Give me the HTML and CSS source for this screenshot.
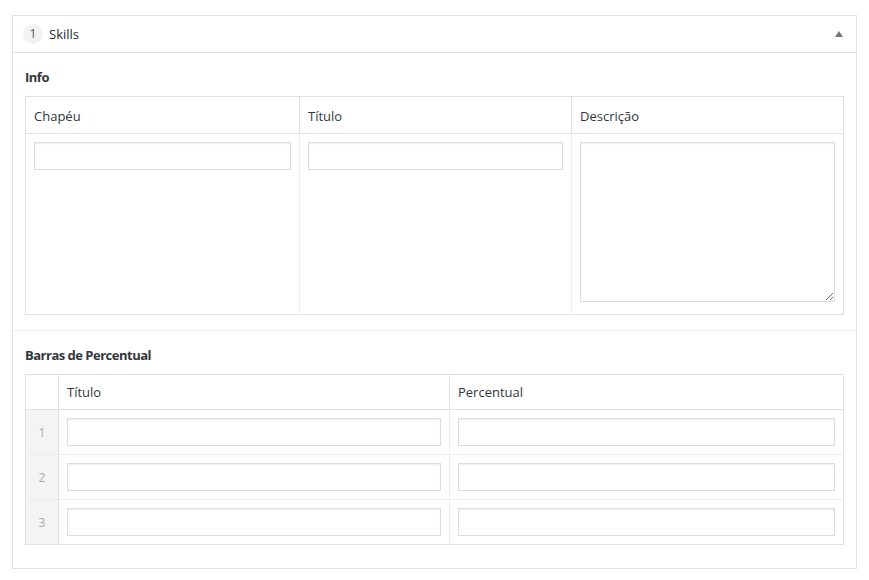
FILE: index.html
```html
<!DOCTYPE html>
<html>
<head>
    <meta charset="utf-8">
    <title>Skills</title>
    <link rel="stylesheet" href="styles.css">
</head>
<body>
    <div class="layout">
        <div class="layout-handle">
            <span class="layout-order">1</span>
            <span class="layout-title">Skills</span>
            <span class="layout-toggle"></span>
        </div>

        <!-- Info group -->
        <div class="field">
            <div class="field-label">Info</div>
            <table class="field-table info-table">
                <thead>
                    <tr>
                        <th class="col-first">Chapéu</th>
                        <th class="col-second">Título</th>
                        <th>Descrição</th>
                    </tr>
                </thead>
                <tbody>
                    <tr>
                        <td><input type="text" class="text-input"></td>
                        <td><input type="text" class="text-input"></td>
                        <td><textarea class="text-area"></textarea></td>
                    </tr>
                </tbody>
            </table>
        </div>

        <!-- Repeater -->
        <div class="field field-last">
            <div class="field-label">Barras de Percentual</div>
            <table class="field-table repeater-table">
                <thead>
                    <tr>
                        <th class="row-handle"></th>
                        <th class="col-title">Título</th>
                        <th>Percentual</th>
                    </tr>
                </thead>
                <tbody>
                    <tr>
                        <td class="row-handle">1</td>
                        <td><input type="text" class="text-input"></td>
                        <td><input type="text" class="text-input"></td>
                    </tr>
                    <tr>
                        <td class="row-handle">2</td>
                        <td><input type="text" class="text-input"></td>
                        <td><input type="text" class="text-input"></td>
                    </tr>
                    <tr>
                        <td class="row-handle">3</td>
                        <td><input type="text" class="text-input"></td>
                        <td><input type="text" class="text-input"></td>
                    </tr>
                </tbody>
            </table>
        </div>
    </div>
</body>
</html>
```

FILE: styles.css
```css
body {
    margin: 15px 12px 0 12px;
    font-family: "Open Sans", "Noto Sans", sans-serif;
    font-size: 13px;
    color: #32373c;
    background: #fff;
}

.layout {
    border: 1px solid #e1e1e1;
    background: #fff;
}

.layout-handle {
    display: flex;
    align-items: center;
    height: 36px;
    padding: 0 12px 0 10px;
    border-bottom: 1px solid #e1e1e1;
}

.layout-order {
    width: 20px;
    height: 20px;
    line-height: 20px;
    border-radius: 50%;
    background: #f2f2f2;
    color: #555;
    font-size: 12px;
    text-align: center;
    margin-right: 6px;
}

.layout-title {
    flex: 1;
    font-size: 13px;
    color: #23282d;
}

.layout-toggle {
    width: 0;
    height: 0;
    border-left: 4px solid transparent;
    border-right: 4px solid transparent;
    border-bottom: 6px solid #72777c;
    margin-right: 1px;
    margin-top: -1px;
}

.field {
    padding: 14px 12px 15px 12px;
    border-bottom: 1px solid #eee;
}

.field-last {
    border-bottom: none;
    padding-top: 14px;
    padding-bottom: 23px;
}

.field-label {
    font-weight: 700;
    letter-spacing: -0.5px;
    line-height: 20px;
    margin-bottom: 9px;
    color: #32373c;
}

.field-table {
    width: 100%;
    border-collapse: collapse;
    border: 1px solid #dfdfdf;
    table-layout: fixed;
}

.field-table th {
    text-align: left;
    font-weight: normal;
    color: #32373c;
    padding: 9px 8px 7px;
    line-height: 20px;
    border-left: 1px solid #e1e1e1;
    border-bottom: 1px solid #e1e1e1;
}

.field-table td {
    padding: 8px;
    vertical-align: top;
    border-left: 1px solid #eee;
    border-top: 1px solid #eee;
}

.field-table th:first-child,
.field-table td:first-child {
    border-left: none;
}

.info-table .col-first {
    width: 257px;
}

.info-table .col-second {
    width: 255px;
}

.repeater-table th {
    padding: 8px;
    line-height: 18px;
}

.repeater-table .col-title {
    width: 374px;
}

.repeater-table .row-handle {
    width: 16px;
    padding: 8px;
    text-align: center;
    vertical-align: middle;
    color: #aaa;
    font-size: 12px;
}

.repeater-table td.row-handle {
    background: #f4f4f4;
    border-right: 1px solid #e1e1e1;
}

.repeater-table th.row-handle {
    border-right: 1px solid #e1e1e1;
}

.text-input,
.text-area {
    display: block;
    width: 100%;
    box-sizing: border-box;
    margin: 0;
    border: 1px solid #ddd;
    border-radius: 0;
    box-shadow: inset 0 1px 2px rgba(0, 0, 0, 0.07);
    background: #fff;
    font-family: inherit;
    font-size: 13px;
    outline: none;
}

.text-input {
    height: 28px;
    padding: 3px 5px;
}

.text-area {
    height: 160px;
    margin-bottom: 4px;
    padding: 4px 6px;
    resize: vertical;
}
```
